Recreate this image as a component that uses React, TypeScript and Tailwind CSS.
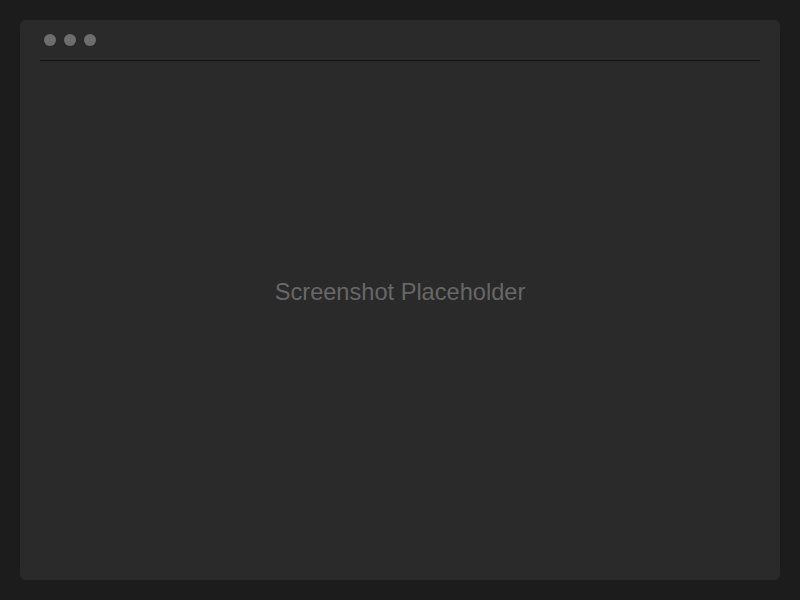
export default function App() {
  return (
    <div className="h-screen bg-[#1c1c1c] p-5 font-['Liberation_Sans',Arial,sans-serif]">
      <div className="h-full flex flex-col bg-[#2a2a2a] rounded-md">
        {/* Window chrome */}
        <div className="mx-5 h-10 shrink-0 flex items-center gap-2 px-1 border-b border-[#111111] box-content">
          <span className="w-3 h-3 rounded-full bg-[#6e6e6e]" />
          <span className="w-3 h-3 rounded-full bg-[#6e6e6e]" />
          <span className="w-3 h-3 rounded-full bg-[#6e6e6e]" />
        </div>

        {/* Content */}
        <div className="flex-1 flex items-center justify-center pb-[55px]">
          <p className="text-[23.6px] text-[#676767]">Screenshot Placeholder</p>
        </div>
      </div>
    </div>
  )
}
